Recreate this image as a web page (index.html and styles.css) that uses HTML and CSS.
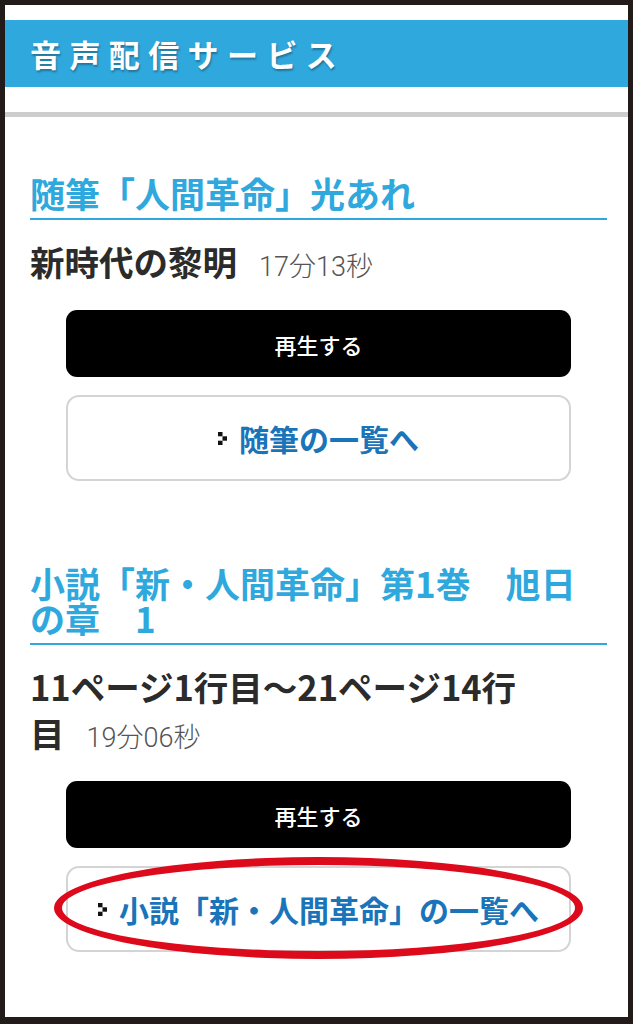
FILE: index.html
```html
<!DOCTYPE html>
<html lang="ja">
  <head>
    <meta charset="utf-8">
    <title>音声配信サービス</title>
    <link rel="stylesheet" href="styles.css">
  </head>
  <body>
    <div class="frame">
      <div class="appbar"><h1>音声配信サービス</h1></div>
      <div class="divider"></div>

      <div class="content">
        <div class="series">
          <h2>随筆「人間革命」光あれ</h2>
          <p class="track">新時代の黎明<span class="time">17分13秒</span></p>
          <a class="btn play" href="#">再生する</a>
          <a class="btn list" href="#">
            <svg class="arrow" width="9" height="13" viewBox="0 0 9 13"><rect x="0" y="0" width="4.5" height="4.3"/><rect x="4.5" y="4.3" width="4.5" height="4.4"/><rect x="0" y="8.7" width="4.5" height="4.3"/></svg>
            随筆の一覧へ
          </a>
        </div>

        <div class="series">
          <h2>小説「新・人間革命」第1巻　旭日の章　1</h2>
          <p class="track">11ページ1行目〜21ページ14行目<span class="time">19分06秒</span></p>
          <a class="btn play" href="#">再生する</a>
          <a class="btn list marked" href="#">
            <svg class="arrow" width="9" height="13" viewBox="0 0 9 13"><rect x="0" y="0" width="4.5" height="4.3"/><rect x="4.5" y="4.3" width="4.5" height="4.4"/><rect x="0" y="8.7" width="4.5" height="4.3"/></svg>
            小説「新・人間革命」の一覧へ
            <span class="circle"></span>
          </a>
        </div>
      </div>
    </div>
  </body>
</html>
```

FILE: styles.css
```css
* { box-sizing: border-box; }
body { margin: 0; background: #fff; font-family: "Noto Sans CJK JP", Roboto, sans-serif; }

.frame { height: 1024px; border: 5px solid #221b19; border-bottom-width: 7px; padding-top: 15px; overflow: hidden; background: #fff; }

.appbar { height: 67px; background: #2fa8dd; padding-left: 25px; display: flex; align-items: center; }
.appbar h1 { margin: 0; color: #fff; font-size: 31px; font-weight: 700; letter-spacing: 8.4px; text-shadow: 1px 2px 2px rgba(0, 0, 0, 0.3); }

.divider { margin-top: 25px; height: 5px; background: #cdcdcd; }

.content { padding: 0 21px 0 25px; }

.series { padding-top: 58px; }
.series + .series { padding-top: 84px; }

.series h2 { margin: 0; padding-bottom: 8px; border-bottom: 2px solid #2fa8dd; color: #2fa8dd; font-size: 35px; line-height: 35px; font-weight: 700; }

.track { margin: 18px 0 0; padding-right: 80px; font-size: 34.5px; line-height: 46px; font-weight: 700; color: #2b2b2b; }
.time { margin-left: 22px; font-family: Roboto, "Noto Sans CJK JP", sans-serif; font-size: 27px; line-height: 1; font-weight: 300; color: #555; }

.btn { display: flex; align-items: center; justify-content: center; margin: 0 36px; text-decoration: none; border-radius: 11px; }
.play { margin-top: 26px; height: 67px; background: #000; color: #fff; font-size: 22px; font-weight: 500; }
.list { position: relative; margin-top: 18px; height: 86px; border: 2px solid #d4d4d4; border-radius: 13px; color: #1a74b9; font-size: 30px; font-weight: 700; }
.arrow { margin-right: 12px; fill: #111; }

.circle { position: absolute; left: -14px; right: -14px; top: -11px; bottom: -9px; border: 8px solid #dc0a1b; border-radius: 50%; }
```
